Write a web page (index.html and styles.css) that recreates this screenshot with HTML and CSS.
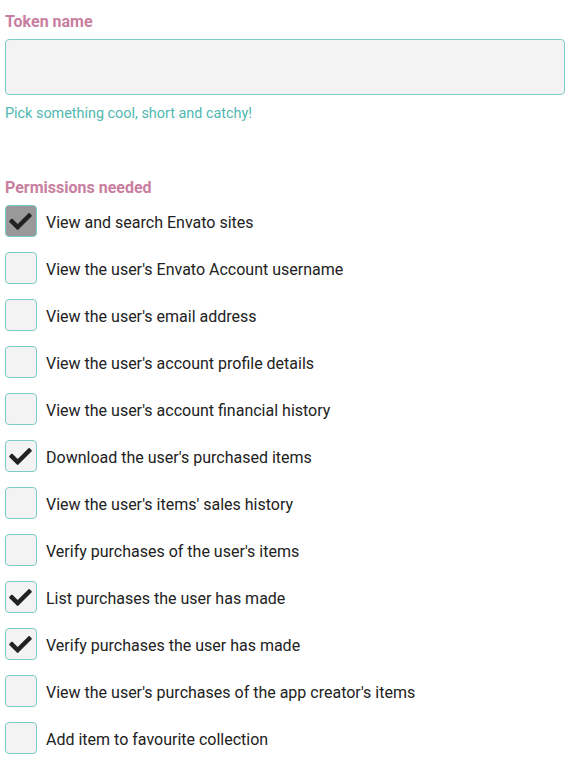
FILE: index.html
```html
<!DOCTYPE html>
<html>
<head>
<meta charset="utf-8">
<link rel="stylesheet" href="styles.css">
</head>
<body>
<form class="form">
  <label class="field-label" for="token">Token name</label>
  <input class="text-input" id="token" type="text">
  <p class="hint">Pick something cool, short and catchy!</p>

  <div class="field-label perms-label">Permissions needed</div>
  <ul class="perms">
    <li class="perm"><span class="box box-disabled"><svg class="check" viewBox="0 64 512 384"><path d="M173.898 439.404l-166.4-166.4c-9.997-9.997-9.997-26.206 0-36.204l36.203-36.204c9.997-9.998 26.207-9.998 36.204 0L192 312.69 432.095 72.596c9.997-9.997 26.207-9.997 36.204 0l36.203 36.204c9.997 9.997 9.997 26.206 0 36.204l-294.4 294.401c-9.998 9.997-26.207 9.997-36.204-.001z"/></svg></span><span class="perm-text">View and search Envato sites</span></li>
    <li class="perm"><span class="box"></span><span class="perm-text">View the user's Envato Account username</span></li>
    <li class="perm"><span class="box"></span><span class="perm-text">View the user's email address</span></li>
    <li class="perm"><span class="box"></span><span class="perm-text">View the user's account profile details</span></li>
    <li class="perm"><span class="box"></span><span class="perm-text">View the user's account financial history</span></li>
    <li class="perm"><span class="box"><svg class="check" viewBox="0 64 512 384"><path d="M173.898 439.404l-166.4-166.4c-9.997-9.997-9.997-26.206 0-36.204l36.203-36.204c9.997-9.998 26.207-9.998 36.204 0L192 312.69 432.095 72.596c9.997-9.997 26.207-9.997 36.204 0l36.203 36.204c9.997 9.997 9.997 26.206 0 36.204l-294.4 294.401c-9.998 9.997-26.207 9.997-36.204-.001z"/></svg></span><span class="perm-text">Download the user's purchased items</span></li>
    <li class="perm"><span class="box"></span><span class="perm-text">View the user's items' sales history</span></li>
    <li class="perm"><span class="box"></span><span class="perm-text">Verify purchases of the user's items</span></li>
    <li class="perm"><span class="box"><svg class="check" viewBox="0 64 512 384"><path d="M173.898 439.404l-166.4-166.4c-9.997-9.997-9.997-26.206 0-36.204l36.203-36.204c9.997-9.998 26.207-9.998 36.204 0L192 312.69 432.095 72.596c9.997-9.997 26.207-9.997 36.204 0l36.203 36.204c9.997 9.997 9.997 26.206 0 36.204l-294.4 294.401c-9.998 9.997-26.207 9.997-36.204-.001z"/></svg></span><span class="perm-text">List purchases the user has made</span></li>
    <li class="perm"><span class="box"><svg class="check" viewBox="0 64 512 384"><path d="M173.898 439.404l-166.4-166.4c-9.997-9.997-9.997-26.206 0-36.204l36.203-36.204c9.997-9.998 26.207-9.998 36.204 0L192 312.69 432.095 72.596c9.997-9.997 26.207-9.997 36.204 0l36.203 36.204c9.997 9.997 9.997 26.206 0 36.204l-294.4 294.401c-9.998 9.997-26.207 9.997-36.204-.001z"/></svg></span><span class="perm-text">Verify purchases the user has made</span></li>
    <li class="perm"><span class="box"></span><span class="perm-text">View the user's purchases of the app creator's items</span></li>
    <li class="perm"><span class="box"></span><span class="perm-text">Add item to favourite collection</span></li>
  </ul>
</form>
</body>
</html>
```

FILE: styles.css
```css
html, body {
  margin: 0;
  padding: 0;
  background: #ffffff;
}
body {
  font-family: Roboto, "Liberation Sans", sans-serif;
  color: #222222;
}
.form {
  display: flex;
  flex-direction: column;
  width: 560px;
  padding: 12px 0 0 5px;
}
.field-label {
  display: block;
  font-size: 16px;
  font-weight: 700;
  line-height: 20px;
  color: #c97ea0;
}
.text-input {
  margin: 7px 0 0 0;
  box-sizing: border-box;
  width: 560px;
  height: 56px;
  border: 1px solid #7dcdc7;
  border-radius: 4px;
  background: #f3f3f3;
  outline: none;
  padding: 0 12px;
  font: inherit;
}
.hint {
  margin: 9px 0 0 0;
  font-size: 14.4px;
  line-height: 20px;
  color: #4fb8b0;
}
.perms-label {
  margin-top: 54px;
}
.perms {
  list-style: none;
  margin: 7px 0 0 0;
  padding: 0;
  display: flex;
  flex-direction: column;
  gap: 15px;
}
.perm {
  display: flex;
  align-items: center;
  gap: 9px;
  height: 32px;
}
.box {
  box-sizing: border-box;
  width: 32px;
  height: 32px;
  flex: none;
  border: 1px solid #7dcdc7;
  border-radius: 4px;
  background: #f3f3f3;
  display: flex;
  align-items: center;
  justify-content: center;
}
.box-disabled {
  background: #999999;
}
.check {
  width: 23px;
  height: 17px;
  fill: #222222;
  margin-left: -1px;
}
.perm-text {
  font-size: 16px;
  line-height: 20px;
  padding-top: 4px;
  color: #222222;
}
```
